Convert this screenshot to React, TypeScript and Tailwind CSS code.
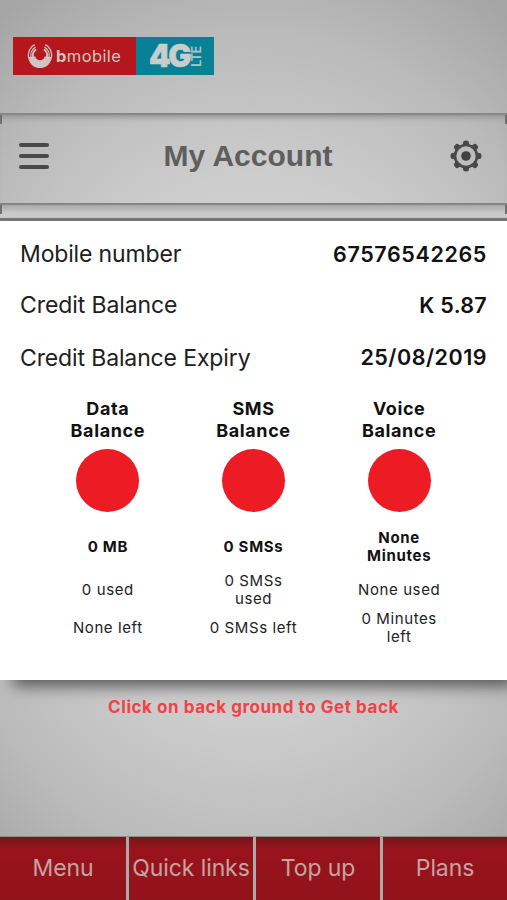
import React from "react";

const accountRows = [
  { label: "Mobile number", value: "67576542265", row: "h-[51px]", labelStyle: "tracking-[-0.15px]", valueStyle: "tracking-[0.62px]" },
  { label: "Credit Balance", value: "K 5.87", row: "h-[51px]", labelStyle: "tracking-[-0.1px]", valueStyle: "tracking-[0.3px]" },
  { label: "Credit Balance Expiry", value: "25/08/2019", row: "h-[54px]", labelStyle: "tracking-[-0.13px]", valueStyle: "tracking-[0.5px]" },
];

const balances = [
  { title: "Data", total: ["0 MB"], used: ["0 used"], left: ["None left"] },
  { title: "SMS", total: ["0 SMSs"], used: ["0 SMSs", "used"], left: ["0 SMSs left"] },
  { title: "Voice", total: ["None", "Minutes"], used: ["None used"], left: ["0 Minutes", "left"] },
];

const tabs = ["Menu", "Quick links", "Top up", "Plans"];

const Lines = ({ lines }: { lines: string[] }) => (
  <>
    {lines.map((line) => (
      <span key={line} className="block whitespace-nowrap">
        {line}
      </span>
    ))}
  </>
);

const GearIcon = () => (
  <svg width="32" height="32" viewBox="0 0 32 32" fill="none">
    <circle cx="16" cy="16" r="11" stroke="#4c4c4c" strokeWidth="2.7" />
    <circle cx="16" cy="16" r="4.8" fill="#424242" />
    {[0, 45, 90, 135, 180, 225, 270, 315].map((angle) => (
      <path
        key={angle}
        d="M11.8 5.4Q13.1 4.4 13.1 2.7Q13.1.5 16 .5Q18.9.5 18.9 2.7Q18.9 4.4 20.2 5.4Z"
        fill="#484848"
        transform={`rotate(${angle} 16 16)`}
      />
    ))}
  </svg>
);

const Logo = () => (
  <div className="flex h-[38px] w-[201px]">
    <div className="flex w-[123px] items-center bg-[#b5171d] pl-[14px]">
      <svg width="26" height="26" viewBox="0 0 26 26" fill="none" stroke="#d0c4c4">
        {/* solid crescent at the bottom, thin open rings up the sides */}
        <path d="M2 14C2 20 7 24.6 13 24.6S24 20 24 14L17.6 13.5A4.7 4.7 0 0 1 8.4 13.5Z" fill="#d0c4c4" stroke="none" />
        <path d="M7.8 1.7C-2.2 6 -.5 23.8 13 24.3C26.5 23.8 28.2 6 18.2 1.7" strokeWidth="1.3" />
        <path d="M8.6 4.1C1 8 2.5 21.5 13 22C23.5 21.5 25 8 17.4 4.1" strokeWidth="1.3" />
        <path d="M9.2 6.5C3.8 9.5 5 19.5 13 20C21 19.5 22.2 9.5 16.8 6.5" strokeWidth="1.8" />
      </svg>
      <span className="ml-[3px] text-[16.5px] leading-none tracking-[0.4px] text-[#cfc3c3]">
        <b>b</b>mobile
      </span>
    </div>
    <div className="flex flex-1 items-center bg-[#088196] pl-[13px]">
      <span className="w-[42px] shrink-0 origin-left scale-x-[.96] text-[32px] leading-none font-black tracking-[-2.3px] text-[#c8cdce] [-webkit-text-stroke:0.5px_#c8cdce]">
        4G
      </span>
      <span className="h-[22px] -rotate-180 text-[13px] leading-[11px] font-semibold tracking-[-0.6px] text-[#b1c5c9] [writing-mode:vertical-rl]">
        LTE
      </span>
    </div>
  </div>
);

// short dark marks where the panel edge meets the sides of the screen
const EdgeMarks = () => (
  <div className="flex h-[9px] w-full justify-between">
    <div className="w-[2px] bg-[#707070]" />
    <div className="w-[2px] bg-[#707070]" />
  </div>
);

const App = () => {
  return (
    <div className="flex h-[900px] w-[507px] flex-col overflow-hidden bg-[radial-gradient(ellipse_85%_60%_at_50%_50%,#dadada_0%,#cdcdcd_50%,#bababa_78%,#a5a5a5_100%)] font-['Inter',sans-serif]">
      <div className="h-[113px] pt-[37px] pl-[13px]">
        <Logo />
      </div>

      <div className="flex h-[90px] flex-col border-t-2 border-[#878787] shadow-[inset_0_6px_5px_-3px_#999]">
        <EdgeMarks />
        <div className="flex flex-1 items-center justify-between px-[19px] pb-[15px]">
          <div className="flex w-[30px] flex-col gap-[7px]">
            <div className="h-1 rounded-full bg-[#484848]" />
            <div className="h-1 rounded-full bg-[#484848]" />
            <div className="h-1 rounded-full bg-[#484848]" />
          </div>
          <h1 className="pr-[3px] font-['Liberation_Sans',sans-serif] text-[30px] leading-none font-bold text-[#5e5e5e]">My Account</h1>
          <div className="mr-[6px]">
            <GearIcon />
          </div>
        </div>
      </div>
      <div className="h-[18px] border-t-2 border-b-[3px] border-[#858585] border-b-[#767676] bg-linear-to-b from-[#a8a8a8] to-[#cacaca] to-60%">
        <EdgeMarks />
      </div>

      <div className="relative h-[459px] bg-white pt-2 shadow-[10px_9px_15px_-3px_#555]">
        {accountRows.map((item) => (
          <div key={item.label} className={`flex items-center justify-between px-5 whitespace-nowrap text-[#202020] ${item.row}`}>
            <span className={`text-[23px] ${item.labelStyle}`}>{item.label}</span>
            <span className={`pb-px text-[21.5px] font-semibold text-[#111] ${item.valueStyle}`}>{item.value}</span>
          </div>
        ))}

        <div className="mx-auto mt-[13px] grid w-[437px] grid-cols-3 text-center text-[#222]">
          {balances.map((item) => (
            <div key={item.title} className="flex flex-col items-center">
              <h2 className="text-[18px] leading-[22px] font-bold tracking-[0.6px] text-[#111]">
                {item.title}
                <br />
                Balance
              </h2>
              <div className="mt-[7px] size-[63px] rounded-full bg-[#ed1c24]" />
              <div className="mt-[13px] flex h-[44px] flex-col justify-center text-[15px] leading-[18px] font-bold tracking-[0.7px] text-[#111]">
                <Lines lines={item.total} />
              </div>
              <div className="flex h-[42px] flex-col justify-center text-[15px] leading-[18px] tracking-[0.6px]">
                <Lines lines={item.used} />
              </div>
              <div className="flex h-[34px] flex-col justify-center text-[15px] leading-[18px] tracking-[0.6px]">
                <Lines lines={item.left} />
              </div>
            </div>
          ))}
        </div>
      </div>

      <p className="mt-4 text-center text-[17px] leading-[22px] font-bold tracking-[0.55px] text-[#f34247]">Click on back ground to Get back</p>

      <div className="mt-auto grid h-[64px] grid-cols-[126px_124px_124px_1fr] gap-[3px] border-t border-[#958c83] bg-[#aaa]">
        {tabs.map((tab) => (
          <button
            key={tab}
            className="bg-linear-to-b from-[#77151a] via-[#99131b] via-20% to-[#92131a] text-[23px] leading-none tracking-[-0.1px] whitespace-nowrap text-[#c4a4a2]"
          >
            {tab}
          </button>
        ))}
      </div>
    </div>
  );
};

export default App;
